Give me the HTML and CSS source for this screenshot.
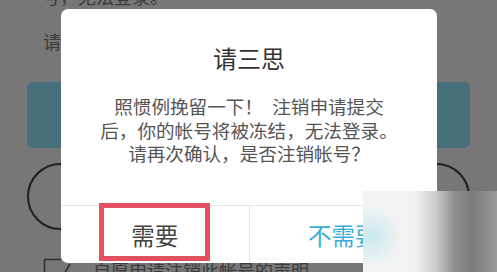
FILE: index.html
```html
<!DOCTYPE html>
<html lang="zh-CN">
<head>
  <meta charset="UTF-8">
  <meta name="viewport" content="width=device-width, initial-scale=1.0">
  <title>注销帐号</title>
  <link rel="stylesheet" href="styles.css">
</head>
<body>
  <div class="page">
    <p class="tip">号，无法登录。</p>
    <p class="hint">请输入登录密码以确认身份</p>
    <button class="btn-solid">下一步</button>
    <button class="btn-outline">取消</button>
    <div class="agree">
      <svg class="check" width="30" height="24" viewBox="0 0 30 24">
        <path d="M18 1.5H1.5V24" fill="none" stroke="#2f2f2f" stroke-width="1.6"/>
        <path d="M8 22l6 6M14 28L27 6" fill="none" stroke="#2f2f2f" stroke-width="1.6"/>
      </svg>
      <span>自愿申请注销此帐号的声明</span>
    </div>
  </div>

  <div class="dialog">
    <div class="dialog-body">
      <h2 class="dialog-title">请三思</h2>
      <p class="dialog-text">照惯例挽留一下！&ensp;注销申请提交<br>后，你的帐号将被冻结，无法登录。<br>请再次确认，是否注销帐号？</p>
    </div>
    <div class="dialog-actions">
      <button class="action action-yes">需要<span class="mark"></span></button>
      <button class="action action-no">不需要</button>
    </div>
  </div>

  <div class="smudge"></div>
</body>
</html>
```

FILE: styles.css
```css
:root {
  --dim-bg: #777777;
  --dim-text: #3b3b3b;
  --teal: #476f7b;
  --blue: #3aaed2;
  --mark: #e4505f;
  --line: #e6e6e6;
}

* {
  box-sizing: border-box;
  margin: 0;
  padding: 0;
}

body {
  width: 497px;
  height: 272px;
  overflow: hidden;
  position: relative;
  background-color: var(--dim-bg);
  font-family: "Noto Sans CJK SC", "Noto Sans", sans-serif;
}

/* 背景のページ（暗くなっている部分） */
.page {
  padding: 0 27px;
  color: var(--dim-text);
  font-size: 18px;
  line-height: 24px;
}

.tip {
  margin: -16px 0 0 15px;
}

.hint {
  margin: 21px 0 0 16px;
}

button {
  font-family: inherit;
  border: none;
  background: none;
  display: block;
  width: 100%;
}

.btn-solid {
  margin-top: 29px;
  height: 66px;
  border-radius: 6px;
  background-color: var(--teal);
  color: #9ab0b6;
  font-size: 20px;
}

.btn-outline {
  margin-top: 15px;
  height: 67px;
  border: 2px solid #1f1f1f;
  border-radius: 34px;
  color: var(--dim-text);
  font-size: 20px;
}

.agree {
  margin-top: 28px;
  display: flex;
  align-items: flex-start;
  gap: 20px;
  padding-left: 16px;
}

.agree span {
  margin-top: 0;
}

/* ダイアログ */
.dialog {
  position: absolute;
  left: 61px;
  top: 9px;
  width: 376px;
  height: 254px;
  background: #fff;
  border-radius: 7px;
  display: flex;
  flex-direction: column;
  overflow: hidden;
}

.dialog-body {
  height: 196px;
  padding-top: 34px;
  text-align: center;
}

.dialog-title {
  font-size: 24px;
  line-height: 30px;
  font-weight: 400;
  color: #333;
}

.dialog-text {
  margin-top: 21px;
  font-size: 18.6px;
  line-height: 23.5px;
  color: #555;
}

.dialog-actions {
  flex: 1;
  display: flex;
  border-top: 1.5px solid var(--line);
}

.action {
  flex: 1;
  position: relative;
  font-size: 23.5px;
  line-height: 56px;
  text-align: center;
}

.action-yes {
  color: #444;
  border-right: 1.5px solid var(--line);
}

.action-no {
  color: var(--blue);
}

/* 赤い枠（注釈） */
.mark {
  position: absolute;
  left: 38px;
  top: -3px;
  width: 111px;
  height: 58px;
  border: 5px solid var(--mark);
}

/* 右下のぼかし */
.smudge {
  position: absolute;
  left: 363px;
  top: 191px;
  width: 134px;
  height: 81px;
  background:
    radial-gradient(ellipse 30px 30px at 8px 45px, rgba(170, 225, 235, 0.6), rgba(170, 225, 235, 0)),
    linear-gradient(90deg, #f2f4f4 0%, #f1f1f1 40%, #c9c9c9 55%, #8e8e8e 68%, #7b7b7b 82%, #9a9a9a 100%);
}
```
